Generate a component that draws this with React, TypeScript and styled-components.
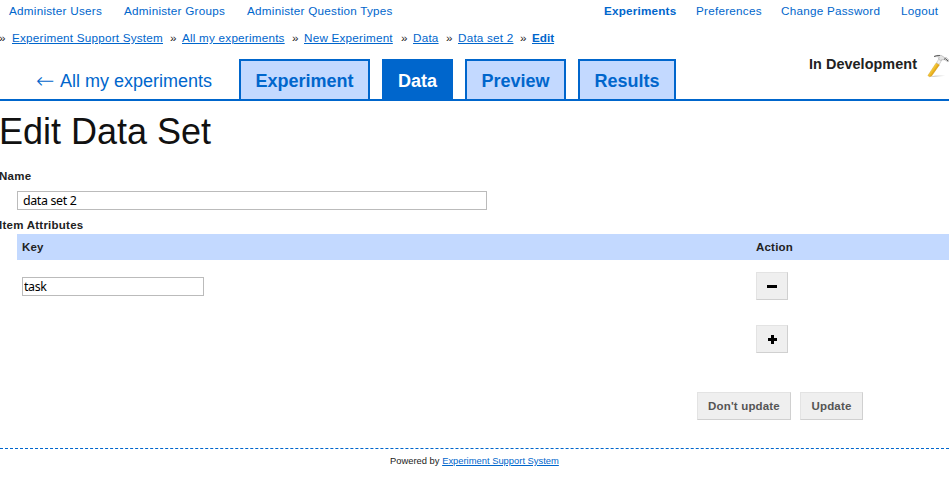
import React from 'react';
import styled, { createGlobalStyle, css } from 'styled-components';

const blue = '#0066cc';
const pale = '#c3d9ff';

const GlobalStyle = createGlobalStyle`
  *, *::before, *::after { box-sizing: border-box; }
  body {
    margin: 0;
    background: #fff;
    color: #222;
    font-family: "Liberation Sans", Arial, sans-serif;
    font-size: 11.7px;
    overflow: hidden;
  }
  a { color: ${blue}; }
`;

const Page = styled.div`
  width: 949px;
  height: 477px;
  display: flex;
  flex-direction: column;
  overflow: hidden;
  white-space: nowrap;
`;

const TopBar = styled.nav`
  display: flex;
  justify-content: space-between;
  height: 24px;
  padding: 0 10px 0 9px;
  line-height: 22px;
`;

const LinkGroup = styled.div<{ $gap: number }>`
  display: flex;
  gap: ${(p) => p.$gap}px;
`;

const NavLink = styled.a<{ $bold?: boolean; $width: number }>`
  width: ${(p) => p.$width}px;
  text-decoration: none;
  font-size: 11.7px;
  letter-spacing: ${(p) => (p.$bold ? 0.2 : 0.25)}px;
  font-weight: ${(p) => (p.$bold ? 'bold' : 'normal')};
`;

const Breadcrumbs = styled.nav`
  display: flex;
  height: 35px;
  line-height: 28px;
`;

const Crumb = styled.span<{ $width: number }>`
  display: flex;
  width: ${(p) => p.$width}px;
  &::before { content: '»'; flex: none; width: 12px; }
  &:first-child::before { text-indent: -1px; }
`;

const CrumbLink = styled.a<{ $bold?: boolean }>`
  font-size: 11.7px;
  letter-spacing: ${(p) => (p.$bold ? 0 : 0.22)}px;
  font-weight: ${(p) => (p.$bold ? 'bold' : 'normal')};
`;

const Header = styled.header`
  display: flex;
  justify-content: space-between;
  height: 42px;
  border-bottom: 2px solid ${blue};
`;

const Tabs = styled.div`
  display: flex;
  gap: 12px;
  padding-left: 36px;
`;

const BackLink = styled.a`
  display: flex;
  width: 191px;
  height: 40px;
  font-size: 18px;
  line-height: 44px;
  text-decoration: none;
`;

const Arrow = styled.span`
  flex: none;
  width: 24px;
  font-family: "DejaVu Sans", sans-serif;
  font-size: 22px;
  font-weight: 200;
  line-height: 43px;
`;

const Tab = styled.a<{ $active?: boolean; $width: number }>`
  width: ${(p) => p.$width}px;
  border: 2px solid ${blue};
  border-bottom: 0;
  background: ${(p) => (p.$active ? blue : pale)};
  color: ${(p) => (p.$active ? '#fff' : blue)};
  font-size: 18px;
  font-weight: bold;
  line-height: 40px;
  text-align: center;
  text-decoration: none;
`;

const Status = styled.div`
  display: flex;
  width: 140px;
  height: 20px;
  font-size: 14.4px;
  letter-spacing: 0.06px;
  font-weight: bold;
  line-height: 10px;
`;

const StatusLabel = styled.span`
  width: 118px;
`;

const HammerIcon = styled.svg`
  flex: none;
  width: 22px;
  height: 24px;
  margin-top: -5px;
`;

const Title = styled.h1`
  margin: 0 0 0 -1px;
  height: 67px;
  color: #111;
  font-size: 36px;
  font-weight: normal;
  line-height: 61px;
`;

const Label = styled.label<{ $height: number }>`
  display: block;
  height: ${(p) => p.$height}px;
  margin-left: -1px;
  font-size: 11.5px;
  font-weight: bold;
  letter-spacing: 0.25px;
  line-height: 16px;
`;

const field = css`
  display: block;
  height: 19px;
  border: 1px solid #bbb;
  border-radius: 0;
  outline: 0;
  background: #fff;
  color: #000;
  font-family: "Noto Sans", sans-serif;
  font-size: 12.4px;
  letter-spacing: -0.35px;
`;

const NameInput = styled.input`
  ${field}
  width: 470px;
  margin: 0 0 7px 17px;
  padding: 0 5px;
`;

const KeyInput = styled.input`
  ${field}
  width: 182px;
  padding: 0 1px;
`;

const Attributes = styled.div`
  margin-left: 17px;
`;

const Row = styled.div<{ $head?: boolean; $height: number; $offset?: number }>`
  display: grid;
  grid-template-columns: 734px 1fr;
  align-items: center;
  height: ${(p) => p.$height}px;
  padding: ${(p) => p.$offset ?? 0}px 0 0 5px;
  background: ${(p) => (p.$head ? pale : 'transparent')};
  font-size: 11.5px;
  font-weight: ${(p) => (p.$head ? 'bold' : 'normal')};
  letter-spacing: 0.2px;
`;

const Button = styled.button<{ $width: number }>`
  display: flex;
  align-items: center;
  justify-content: center;
  width: ${(p) => p.$width}px;
  height: 28px;
  padding: 0;
  border: 1px solid;
  border-color: #e3e3e3 #d0d0d0 #d0d0d0 #e3e3e3;
  background: #efefef;
  color: #555;
  font: bold 11.5px "Liberation Sans", Arial, sans-serif;
  letter-spacing: 0.17px;
`;

const Glyph = styled.svg`
  width: 10px;
  height: 10px;
  shape-rendering: crispEdges;
`;

const Actions = styled.div`
  display: flex;
  gap: 9px;
  height: 56px;
  margin: 27px 0 0 697px;
`;

const Footer = styled.footer`
  height: 29px;
  border-top: 1px dashed ${blue};
  padding-left: 390px;
  font-size: 9.4px;
  line-height: 24px;
`;

function Hammer() {
  return (
    <HammerIcon viewBox="0 0 22 24">
      <defs>
        <linearGradient id="handle" x1="0.2" y1="0.3" x2="0.7" y2="0.7">
          <stop offset="0.2" stopColor="#ffdf4a" />
          <stop offset="0.8" stopColor="#e0a010" />
        </linearGradient>
        <linearGradient id="shade" x1="0" x2="1">
          <stop offset="0" stopColor="#c4c4c4" />
          <stop offset="1" stopColor="#fff" />
        </linearGradient>
      </defs>
      <path d="M3 23Q8 20.5 19 21Q16 23 3 23Z" fill="url(#shade)" />
      <path d="M12 4.5 15 5.6 12.2 10.6 9.4 9.2Z" fill="#f1f1f1" stroke="#aaa" strokeWidth="0.5" />
      <path d="M9 9.2 12.4 10.9 4.6 22Q2.4 23.6 .9 21.6Z" fill="url(#handle)" stroke="#c99112" strokeWidth="0.4" />
      <path d="M7 2.6Q10 .8 14.2 1.4L18 3.8 19.4 3.6 22 6.2 20.8 7.8 17.6 5.7 15 5.8 13.2 6.4 11.6 5 12.2 3.1Q9.4 2.4 7 2.6Z" fill="#e4e4e4" stroke="#999" strokeWidth="0.5" />
      <path d="M7 2.5Q9.4 1.3 13 1.5" fill="none" stroke="#555" strokeWidth="0.9" />
      <path d="M17 5.2 18.6 4.7 21.2 7.2" fill="none" stroke="#555" strokeWidth="1" />
    </HammerIcon>
  );
}

const adminLinks = [
  { text: 'Administer Users', width: 93 },
  { text: 'Administer Groups', width: 101 },
  { text: 'Administer Question Types', width: 145 },
];

const userLinks = [
  { text: 'Experiments', width: 73, bold: true },
  { text: 'Preferences', width: 66 },
  { text: 'Change Password', width: 101 },
  { text: 'Logout', width: 38 },
];

const crumbs = [
  { text: 'Experiment Support System', width: 170 },
  { text: 'All my experiments', width: 122 },
  { text: 'New Experiment', width: 109 },
  { text: 'Data', width: 45 },
  { text: 'Data set 2', width: 74 },
  { text: 'Edit', width: 50, bold: true },
];

const tabs = [
  { text: 'Experiment', width: 131 },
  { text: 'Data', width: 71, active: true },
  { text: 'Preview', width: 101 },
  { text: 'Results', width: 98 },
];

export default function App() {
  return (
    <Page>
      <GlobalStyle />
      <TopBar>
        <LinkGroup $gap={22}>
          {adminLinks.map((l) => (
            <NavLink key={l.text} href="#" $width={l.width}>{l.text}</NavLink>
          ))}
        </LinkGroup>
        <LinkGroup $gap={19}>
          {userLinks.map((l) => (
            <NavLink key={l.text} href="#" $width={l.width} $bold={l.bold}>{l.text}</NavLink>
          ))}
        </LinkGroup>
      </TopBar>
      <Breadcrumbs>
        {crumbs.map((c) => (
          <Crumb key={c.text} $width={c.width}>
            <CrumbLink href="#" $bold={c.bold}>{c.text}</CrumbLink>
          </Crumb>
        ))}
      </Breadcrumbs>
      <Header>
        <Tabs>
          <BackLink href="#"><Arrow>←</Arrow>All my experiments</BackLink>
          {tabs.map((t) => (
            <Tab key={t.text} href="#" $width={t.width} $active={t.active}>{t.text}</Tab>
          ))}
        </Tabs>
        <Status>
          <StatusLabel>In Development</StatusLabel>
          <Hammer />
        </Status>
      </Header>
      <Title>Edit Data Set</Title>
      <Label $height={23} htmlFor="name">Name</Label>
      <NameInput id="name" defaultValue="data set 2" />
      <Label as="div" $height={17}>Item Attributes</Label>
      <Attributes>
        <Row $head $height={26}>
          <span>Key</span>
          <span>Action</span>
        </Row>
        <Row $height={52}>
          <KeyInput defaultValue="task" aria-label="Key" />
          <Button $width={32} aria-label="Remove">
            <Glyph viewBox="0 0 10 10"><path d="M0 4h10v3H0z" fill="#000" /></Glyph>
          </Button>
        </Row>
        <Row $height={53} $offset={1}>
          <span />
          <Button $width={32} aria-label="Add">
            <Glyph viewBox="0 0 10 10"><path d="M1 4h3V1h3v3h3v3H7v3H4V7H1z" fill="#000" /></Glyph>
          </Button>
        </Row>
      </Attributes>
      <Actions>
        <Button $width={94}>Don't update</Button>
        <Button $width={63}>Update</Button>
      </Actions>
      <Footer>
        Powered by <a href="#">Experiment Support System</a>
      </Footer>
    </Page>
  );
}
